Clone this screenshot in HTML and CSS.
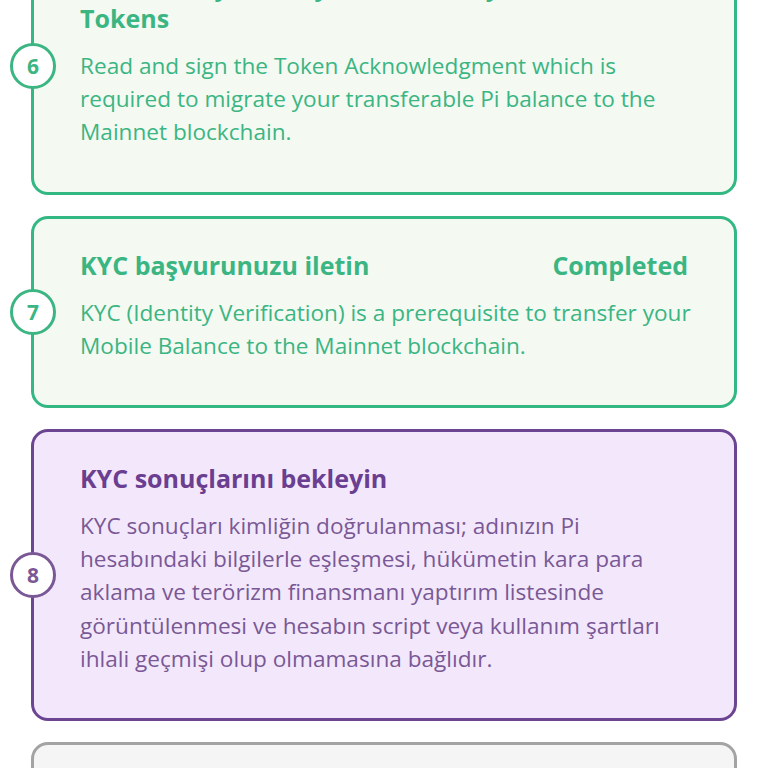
FILE: index.html
```html
<!DOCTYPE html>
<html>
<head>
<meta charset="utf-8">
<link rel="stylesheet" href="styles.css">
</head>
<body>
<div class="steps">
  <div class="card done first">
    <div class="num">6</div>
    <div class="head"><h2 class="title">Token Onayını okuyun ve imzalayın, Mainnet<br>Tokens</h2></div>
    <p class="text">Read and sign the Token Acknowledgment which is<br>required to migrate your transferable Pi balance to the<br>Mainnet blockchain.</p>
  </div>
  <div class="card done">
    <div class="num">7</div>
    <div class="head"><h2 class="title">KYC başvurunuzu iletin</h2><span class="status">Completed</span></div>
    <p class="text">KYC (Identity Verification) is a prerequisite to transfer your<br>Mobile Balance to the Mainnet blockchain.</p>
  </div>
  <div class="card active">
    <div class="num">8</div>
    <div class="head"><h2 class="title">KYC sonuçlarını bekleyin</h2></div>
    <p class="text">KYC sonuçları kimliğin doğrulanması; adınızın Pi<br>hesabındaki bilgilerle eşleşmesi, hükümetin kara para<br>aklama ve terörizm finansmanı yaptırım listesinde<br>görüntülenmesi ve hesabın script veya kullanım şartları<br>ihlali geçmişi olup olmamasına bağlıdır.</p>
  </div>
  <div class="card pending">
    <div class="num">9</div>
    <div class="head"><h2 class="title">Mainnet'e geçiş</h2></div>
    <p class="text">Mainnet blockchain.</p>
  </div>
</div>
</body>
</html>
```
FILE: styles.css
```css
html, body {
  margin: 0;
  padding: 0;
  background: #ffffff;
  overflow: hidden;
  height: 768px;
}
body {
  font-family: "Open Sans", "Noto Sans", sans-serif;
}
.steps {
  display: flex;
  flex-direction: column;
  gap: 21px;
  padding: 0 31px 0 31px;
}
.card {
  position: relative;
  border: 3px solid;
  border-radius: 17px;
  padding: 30px 46px 43px 46px;
}
.first {
  margin-top: -63px;
}
.done {
  border-color: #33b783;
  background: #f4faf2;
  color: #3bb582;
}
.active {
  border-color: #6c4592;
  background: #f3e8fb;
  color: #7a5896;
}
.active .title {
  color: #6a3e90;
}
.pending {
  border-color: #a3a3a3;
  background: #f5f5f5;
  color: #9a9a9a;
}
.num {
  position: absolute;
  left: -24px;
  top: 50%;
  transform: translateY(-50%);
  width: 40px;
  height: 40px;
  border: 3px solid;
  border-radius: 50%;
  background: #ffffff;
  display: flex;
  align-items: center;
  justify-content: center;
  font-size: 21px;
  font-weight: 700;
}
.head {
  display: flex;
  justify-content: space-between;
  align-items: baseline;
}
.title, .status {
  margin: 0;
  font-size: 25px;
  line-height: 32px;
  font-weight: 700;
}
.text {
  margin: 15px 0 0 0;
  font-size: 22.6px;
  line-height: 33.2px;
  white-space: nowrap;
}
```
